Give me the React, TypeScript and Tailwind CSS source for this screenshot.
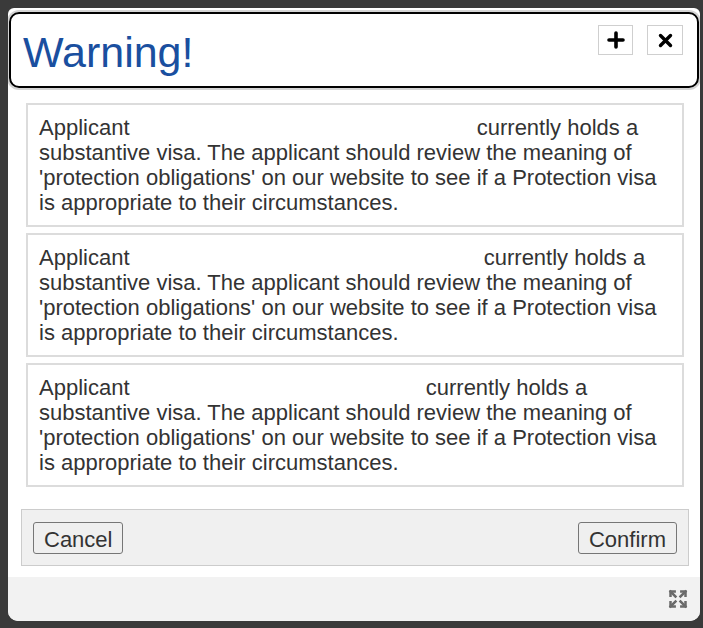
import React from "react";

const font = { fontFamily: '"Liberation Sans", Arial, sans-serif' };

function PlusIcon() {
  return (
    <svg width="18" height="18" viewBox="0 0 18 18">
      <path d="M9 2v14M2 9h14" stroke="#000" strokeWidth="3.6" strokeLinecap="round" />
    </svg>
  );
}

function CloseIcon() {
  return (
    <svg width="15" height="15" viewBox="0 0 15 15">
      <path d="M2.5 2.5l10 10M12.5 2.5l-10 10" stroke="#000" strokeWidth="3.4" strokeLinecap="round" />
    </svg>
  );
}

function ResizeIcon() {
  return (
    <svg width="20" height="20" viewBox="0 0 24 24" fill="none" stroke="#6b6b6b" strokeWidth="3" strokeLinecap="square">
      <path d="m15 15 6 6" />
      <path d="m15 9 6-6" />
      <path d="M21 16v5h-5" />
      <path d="M21 8V3h-5" />
      <path d="M3 16v5h5" />
      <path d="m3 21 6-6" />
      <path d="M3 8V3h5" />
      <path d="M9 9 3 3" />
    </svg>
  );
}

function Notice({ gap }: { gap: number }) {
  return (
    <div className="border-2 border-[#dcdcdc] bg-white px-[11px] pt-[10px] pb-[10px] text-[22px] leading-[25px] text-[#333] whitespace-nowrap">
      Applicant <span className="inline-block" style={{ width: gap }} /> currently holds a
      <br />
      substantive visa. The applicant should review the meaning of
      <br />
      'protection obligations' on our website to see if a Protection visa
      <br />
      is appropriate to their circumstances.
    </div>
  );
}

export default function App() {
  return (
    <div className="w-[703px] h-[628px] bg-[#3a3a3a] pt-[8px] pl-[8px] pr-[3px] pb-[7px]" style={font}>
      <div className="h-full bg-white rounded-b-[10px] rounded-t-[6px] flex flex-col overflow-hidden">
        <div className="mx-[1px] mt-[4px] h-[76px] border-2 border-black rounded-[10px] shadow-[0_0_0_2px_#d4d4d4] flex items-start justify-between pl-[12px] pr-[14px]">
          <h1 className="mt-[12px] text-[43px] leading-[52px] text-[#1a4f9f]">Warning!</h1>
          <div className="mt-[11px] flex gap-[14px]">
            <button className="w-[35px] h-[30px] border border-[#cfcfcf] bg-white flex items-center justify-center">
              <PlusIcon />
            </button>
            <button className="w-[36px] h-[30px] border border-[#cfcfcf] bg-white flex items-center justify-center">
              <CloseIcon />
            </button>
          </div>
        </div>

        <div className="mt-[15px] ml-[18px] mr-[16px] flex flex-col gap-[6px]">
          <Notice gap={335} />
          <Notice gap={342} />
          <Notice gap={284} />
        </div>

        <div className="mt-[22px] ml-[13px] mr-[11px] h-[57px] bg-[#f0f0f0] border border-[#cccccc] flex items-center justify-between px-[11px]">
          <button className="h-[32px] px-[10px] border border-[#767676] rounded-[3px] bg-[#efefef] text-[22px] text-[#333]">
            Cancel
          </button>
          <button className="h-[32px] px-[10px] border border-[#767676] rounded-[3px] bg-[#efefef] text-[22px] text-[#333]">
            Confirm
          </button>
        </div>

        <div className="mt-[11px] flex-1 bg-[#f2f2f2] flex items-end justify-end pr-[12px] pb-[12px]">
          <ResizeIcon />
        </div>
      </div>
    </div>
  );
}
